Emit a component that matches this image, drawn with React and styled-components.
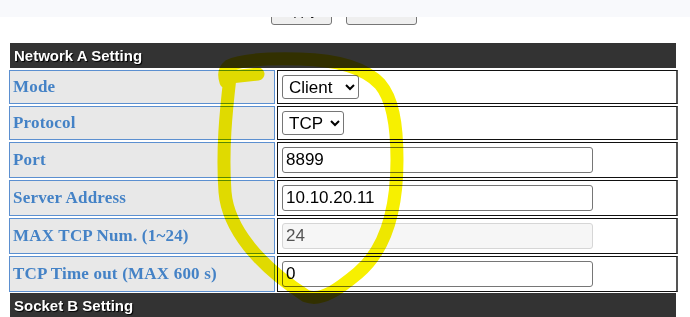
import styled, { createGlobalStyle } from 'styled-components';

const GlobalStyle = createGlobalStyle`
  html, body {
    margin: 0;
    padding: 0;
    background: #ffffff;
  }
  body {
    font-family: "Liberation Sans", Arial, sans-serif;
    width: 690px;
    height: 317px;
    overflow: hidden;
    position: relative;
  }
`;

const Page = styled.div`
  position: relative;
  width: 690px;
  height: 317px;
  overflow: hidden;
`;

/* sticky strip of the browser page lying over the button bar */
const TopStrip = styled.div`
  position: absolute;
  left: 0;
  top: 0;
  width: 100%;
  height: 17px;
  background: #f8f9fc;
  z-index: 2;
`;

const ButtonBar = styled.div`
  display: flex;
  justify-content: center;
  gap: 14px;
  padding: 2px 0 0 0;
  width: 687px;
`;

const Button = styled.button`
  width: ${p => p.$w}px;
  height: 23px;
  font-family: "Liberation Sans", Arial, sans-serif;
  font-size: 13px;
  color: #000;
  background: #efefef;
  border: 1px solid #767676;
  border-radius: 3px;
  padding: 0 0 7px 0;
`;

const Section = styled.div`
  display: grid;
  grid-template-columns: 266px 1fr;
  gap: 2px;
  width: 669px;
  margin-left: 9px;
  margin-top: ${p => p.$top}px;
`;

const SectionHead = styled.div`
  grid-column: 1 / span 2;
  height: 25px;
  margin: 0 2px 0 1px;
  background: #333333;
  color: #ffffff;
  font-family: "Liberation Sans", Arial, sans-serif;
  font-weight: bold;
  font-size: 15px;
  display: flex;
  align-items: center;
  padding-left: 4px;
  text-shadow: 1px 1px 1px #000;
`;

const Label = styled.div`
  background: #e8e8e8;
  border: 1px solid #5b8fd0;
  color: #4482c6;
  font-family: "Liberation Serif", Georgia, serif;
  font-weight: bold;
  font-size: 17px;
  letter-spacing: 0.2px;
  display: flex;
  align-items: center;
  padding-left: 3px;
  height: ${p => p.$h}px;
  box-sizing: border-box;
`;

const Value = styled.div`
  background: #ffffff;
  border: 1px solid #111;
  border-right: 2px solid #555;
  display: flex;
  align-items: center;
  padding-left: 4px;
  height: ${p => p.$h}px;
  box-sizing: border-box;
`;

const Select = styled.select`
  height: 24px;
  font-family: "Liberation Sans", Arial, sans-serif;
  font-size: 17px;
  color: #000;
  background: #fff;
  border: 1px solid #767676;
  border-radius: 3px;
  padding: 0 2px;
`;

const Input = styled.input`
  width: 311px;
  height: 26px;
  box-sizing: border-box;
  font-family: "Liberation Sans", Arial, sans-serif;
  font-size: 17px;
  color: ${p => (p.disabled ? '#545454' : '#000')};
  background: ${p => (p.disabled ? '#f6f6f6' : '#fff')};
  border: 1px solid ${p => (p.disabled ? '#d6d6d6' : '#767676')};
  border-radius: 3px;
  padding: 0 3px;
`;

const Marker = styled.svg`
  position: absolute;
  left: 0;
  top: 0;
  width: 690px;
  height: 317px;
  pointer-events: none;
  mix-blend-mode: multiply;
  z-index: 3;
`;

const rows = [
  { label: 'Mode', kind: 'select', value: 'Client', options: ['Client', 'Server'] },
  { label: 'Protocol', kind: 'select', value: 'TCP', options: ['TCP', 'UDP'] },
  { label: 'Port', kind: 'input', value: '8899' },
  { label: 'Server Address', kind: 'input', value: '10.10.20.11' },
  { label: 'MAX TCP Num. (1~24)', kind: 'input', value: '24', disabled: true },
  { label: 'TCP Time out (MAX 600 s)', kind: 'input', value: '0' },
];

export default function App() {
  return (
    <Page>
      <GlobalStyle />
      <TopStrip />
      <ButtonBar>
        <Button $w={61}>Apply</Button>
        <Button $w={71}>Cancel</Button>
      </ButtonBar>

      <Section $top={18}>
        <SectionHead>Network A Setting</SectionHead>
        {rows.map(r => {
          const h = r.kind === 'select' ? 34 : 36;
          return [
            <Label key={r.label + 'l'} $h={h}>{r.label}</Label>,
            <Value key={r.label + 'v'} $h={h}>
              {r.kind === 'select' ? (
                <Select defaultValue={r.value}>
                  {r.options.map(o => <option key={o}>{o}</option>)}
                </Select>
              ) : (
                <Input defaultValue={r.value} disabled={r.disabled} />
              )}
            </Value>,
          ];
        })}
      </Section>

      <Section $top={1}>
        <SectionHead>Socket B Setting</SectionHead>
      </Section>

      <Marker viewBox="0 0 690 317">
        <path
          d="M258 74 L230 77 C226 112 222 150 225 192 C228 228 258 265 306 296 C322 302 340 288 358 273 C384 251 397 215 397 160 C397 122 392 98 380 84 C365 68 340 60 300 59 C262 58 238 61 229 66 C224 70 224 76 226 82"
          fill="none"
          stroke="#f7f000"
          strokeWidth="13"
          strokeLinecap="round"
          strokeLinejoin="round"
        />
      </Marker>
    </Page>
  );
}
